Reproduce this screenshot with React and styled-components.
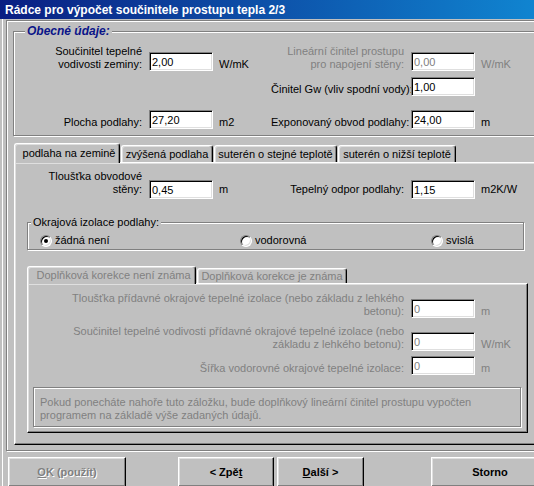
import React from 'react'
import styled, { createGlobalStyle, css } from 'styled-components'

const GlobalStyle = createGlobalStyle`
  html, body {
    margin: 0;
    padding: 0;
    width: 534px;
    height: 486px;
    overflow: hidden;
    background: #c0c0c0;
  }
  body {
    font-family: "Liberation Sans", Arial, sans-serif;
    font-size: 11px;
    color: #000;
  }
`

const Window = styled.div`
  width: 560px;
  height: 486px;
  display: flex;
  flex-direction: column;
  background: #c0c0c0;
`

const TitleBar = styled.div`
  height: 19px;
  line-height: 20px;
  padding-left: 5px;
  background: linear-gradient(90deg, #0a1e82, #1084d0 95%);
  color: #fff;
  font-weight: bold;
  font-size: 12px;
  white-space: nowrap;
`

const Client = styled.div`
  flex: 1;
  margin-left: 2px;
  border-left: 1px solid #fff;
  padding: 1px 0 0 3px;
  display: flex;
  flex-direction: column;
`

// etched frame: dark line + white line
const etched = css`
  border: 1px solid #808080;
  box-shadow: inset 1px 1px 0 #fff, 1px 1px 0 #fff;
`

const Frame = styled.div`
  ${etched};
  padding: 10px 0 5px 6px;
  display: flex;
  flex-direction: column;
`

const GroupBox = styled.div`
  ${etched};
  position: relative;
  margin-top: ${p => p.$mt || 0}px;
  margin-left: ${p => p.$ml || 0}px;
  width: ${p => (p.$w ? `${p.$w}px` : 'auto')};
  padding: ${p => p.$pad};
`

const Legend = styled.span`
  position: absolute;
  top: -8px;
  left: ${p => p.$left}px;
  padding: 0 2px;
  background: #c0c0c0;
  line-height: 14px;
  white-space: nowrap;
  ${p => p.$title && css`
    font-size: 12px;
    font-weight: bold;
    font-style: italic;
    color: #0a1488;
  `}
`

const FieldGrid = styled.div`
  display: grid;
  grid-template-columns: ${p => p.$cols};
  grid-template-rows: ${p => p.$rows};
  align-items: end;
`

const Label = styled.div`
  text-align: right;
  padding-right: 7px;
  line-height: 13px;
  white-space: nowrap;
  color: ${p => (p.$disabled ? '#808080' : '#000')};
  margin-bottom: ${p => p.$lift || 0}px;
`

const Unit = styled.div`
  padding-left: 6px;
  line-height: 13px;
  white-space: nowrap;
  color: ${p => (p.$disabled ? '#808080' : '#000')};
  margin-bottom: ${p => p.$lift || 0}px;
`

const Edit = styled.input`
  box-sizing: border-box;
  width: 64px;
  height: 19px;
  margin: 0;
  padding: 0 2px;
  background: #fff;
  border: 1px solid;
  border-color: #808080 #fff #fff #808080;
  box-shadow: inset 1px 1px 0 #000, inset -1px -1px 0 #dfdfdf;
  font: 11px "Liberation Sans", Arial, sans-serif;
  color: ${p => (p.$disabled ? '#808080' : '#000')};
  outline: none;
`

const TabControl = styled.div`
  display: flex;
  flex-direction: column;
  margin-top: ${p => p.$mt || 0}px;
  margin-left: ${p => p.$ml || 0}px;
  width: ${p => (p.$w ? `${p.$w}px` : 'auto')};
`

const TabStrip = styled.div`
  display: flex;
  align-items: flex-end;
  height: ${p => p.$h}px;
  position: relative;
  z-index: 1;
`

const Tab = styled.div`
  box-sizing: border-box;
  width: ${p => p.$w}px;
  height: ${p => (p.$active ? p.$h + 1 : p.$h - 2)}px;
  margin-left: ${p => (p.$first ? 0 : 1)}px;
  margin-bottom: ${p => (p.$active ? -1 : 0)}px;
  padding-left: ${p => (p.$active ? 4 : 0)}px;
  background: #c0c0c0;
  border-top: 1px solid #fff;
  border-left: 1px solid #fff;
  border-right: 1px solid #000;
  border-radius: 3px 3px 0 0;
  box-shadow: inset -1px 0 0 #808080, inset 1px 1px 0 #dfdfdf;
  display: flex;
  align-items: center;
  justify-content: center;
  line-height: 13px;
  white-space: nowrap;
  color: ${p => (p.$disabled ? '#808080' : '#000')};
`

const TabPanel = styled.div`
  border: 1px solid;
  border-color: #fff #000 #000 #fff;
  box-shadow: inset -1px -1px 0 #808080, inset 1px 1px 0 #dfdfdf;
  padding: ${p => p.$pad};
  display: flex;
  flex-direction: column;
`

const RadioRow = styled.div`
  display: grid;
  grid-template-columns: 200px 191px auto;
  padding-left: 12px;
`

const Radio = styled.label`
  display: flex;
  align-items: center;
  gap: 3px;
  line-height: 13px;
  white-space: nowrap;
`

const RadioDot = styled.span`
  position: relative;
  box-sizing: border-box;
  width: 12px;
  height: 12px;
  border-radius: 50%;
  background: #fff;
  border: 1px solid;
  border-color: #808080 #fff #fff #808080;
  box-shadow: inset 1px 1px 0 #000, inset -1px -1px 0 #dfdfdf;
  ${p => p.$checked && css`
    &::after {
      content: '';
      position: absolute;
      left: 3px;
      top: 3px;
      width: 4px;
      height: 4px;
      border-radius: 50%;
      background: #000;
    }
  `}
`

const InfoBox = styled.div`
  ${etched};
  margin: 12px 0 0 5px;
  width: 488px;
  box-sizing: border-box;
  padding: 8px 0 4px 6px;
  line-height: 13px;
  color: #808080;
  white-space: nowrap;
`

const ButtonRow = styled.div`
  display: flex;
  margin-top: 6px;
`

const Button = styled.button`
  box-sizing: border-box;
  flex: none;
  width: ${p => p.$w}px;
  height: 30px;
  margin-left: ${p => p.$ml}px;
  padding: 0;
  background: #c0c0c0;
  border: 1px solid;
  border-color: #fff #000 #000 #fff;
  box-shadow: inset -1px -1px 0 #808080, inset 1px 1px 0 #dfdfdf;
  font: bold 11px "Liberation Sans", Arial, sans-serif;
  color: ${p => (p.disabled ? '#808080' : '#000')};
  text-shadow: ${p => (p.disabled ? '1px 1px 0 #fff' : 'none')};
`

const U = styled.span`
  text-decoration: underline;
`

const outerTabs = [
  { id: 'zemina', text: 'podlaha na zemině', w: 106 },
  { id: 'zvysena', text: 'zvýšená podlaha', w: 92 },
  { id: 'stejna', text: 'suterén o stejné teplotě', w: 123 },
  { id: 'nizsi', text: 'suterén o nižší teplotě', w: 118 },
]

const innerTabs = [
  { id: 'nezname', text: 'Doplňková korekce není známa', w: 169 },
  { id: 'zname', text: 'Doplňková korekce je známa', w: 150 },
]

const App = () => {
  return (
    <Window>
      <GlobalStyle />
      <TitleBar>Rádce pro výpočet součinitele prostupu tepla 2/3</TitleBar>
      <Client>
        <Frame>
          <GroupBox $pad="13px 0 6px 0">
            <Legend $title $left={11}>Obecné údaje:</Legend>
            <FieldGrid $cols="135px 64px 58px 140px 64px auto" $rows="26px 25px 33px">
              <Label>Součinitel tepelné<br />vodivosti zeminy:</Label>
              <Edit readOnly value="2,00" />
              <Unit>W/mK</Unit>
              <Label $disabled>Lineární činitel prostupu<br />pro napojení stěny:</Label>
              <Edit readOnly $disabled value="0,00" />
              <Unit $disabled>W/mK</Unit>

              <div />
              <div />
              <div />
              <Label>Činitel Gw (vliv spodní vody):</Label>
              <Edit readOnly value="1,00" />
              <div />

              <Label>Plocha podlahy:</Label>
              <Edit readOnly value="27,20" />
              <Unit>m2</Unit>
              <Label>Exponovaný obvod podlahy:</Label>
              <Edit readOnly value="24,00" />
              <Unit>m</Unit>
            </FieldGrid>
          </GroupBox>

          <TabControl $mt={7} $ml={1}>
            <TabStrip $h={19}>
              {outerTabs.map((t, i) => (
                <Tab key={t.id} $h={19} $w={t.w} $first={i === 0} $active={i === 0}>
                  {t.text}
                </Tab>
              ))}
            </TabStrip>
            <TabPanel $pad="7px 0 11px 0">
              <FieldGrid $cols="134px 64px 58px 140px 64px auto" $rows="29px">
                <Label $lift={3}>Tloušťka obvodové<br />stěny:</Label>
                <Edit readOnly value="0,45" />
                <Unit $lift={3}>m</Unit>
                <Label $lift={3}>Tepelný odpor podlahy:</Label>
                <Edit readOnly value="1,15" />
                <Unit $lift={3}>m2K/W</Unit>
              </FieldGrid>

              <GroupBox $mt={23} $ml={12} $w={495} $pad="11px 0 2px 0">
                <Legend $left={3}>Okrajová izolace podlahy:</Legend>
                <RadioRow>
                  <Radio><RadioDot $checked />žádná není</Radio>
                  <Radio><RadioDot />vodorovná</Radio>
                  <Radio><RadioDot />svislá</Radio>
                </RadioRow>
              </GroupBox>

              <TabControl $mt={16} $ml={12} $w={501}>
                <TabStrip $h={17}>
                  {innerTabs.map((t, i) => (
                    <Tab key={t.id} $h={17} $w={t.w} $first={i === 0} $active={i === 0} $disabled>
                      {t.text}
                    </Tab>
                  ))}
                </TabStrip>
                <TabPanel $pad="8px 0 5px 0">
                  <FieldGrid $cols="383px 64px auto" $rows="26px 33px 24px">
                    <Label $disabled>
                      Tloušťka přídavné okrajové tepelné izolace (nebo základu z lehkého<br />betonu):
                    </Label>
                    <Edit readOnly $disabled value="0" />
                    <Unit $disabled>m</Unit>

                    <Label $disabled>
                      Součinitel tepelné vodivosti přídavné okrajové tepelné izolace (nebo<br />základu z lehkého betonu):
                    </Label>
                    <Edit readOnly $disabled value="0" />
                    <Unit $disabled>W/mK</Unit>

                    <Label $disabled>Šířka vodorovné okrajové tepelné izolace:</Label>
                    <Edit readOnly $disabled value="0" />
                    <Unit $disabled>m</Unit>
                  </FieldGrid>
                  <InfoBox>
                    Pokud ponecháte nahoře tuto záložku, bude doplňkový lineární činitel prostupu vypočten<br />
                    programem na základě výše zadaných údajů.
                  </InfoBox>
                </TabPanel>
              </TabControl>
            </TabPanel>
          </TabControl>
        </Frame>

        <ButtonRow>
          <Button disabled $w={118} $ml={2}><U>O</U>K (použít)</Button>
          <Button $w={96} $ml={52}>&lt; Zpě<U>t</U></Button>
          <Button $w={87} $ml={3}><U>D</U>alší &gt;</Button>
          <Button $w={118} $ml={67}>Storno</Button>
        </ButtonRow>
      </Client>
    </Window>
  )
}

export default App
